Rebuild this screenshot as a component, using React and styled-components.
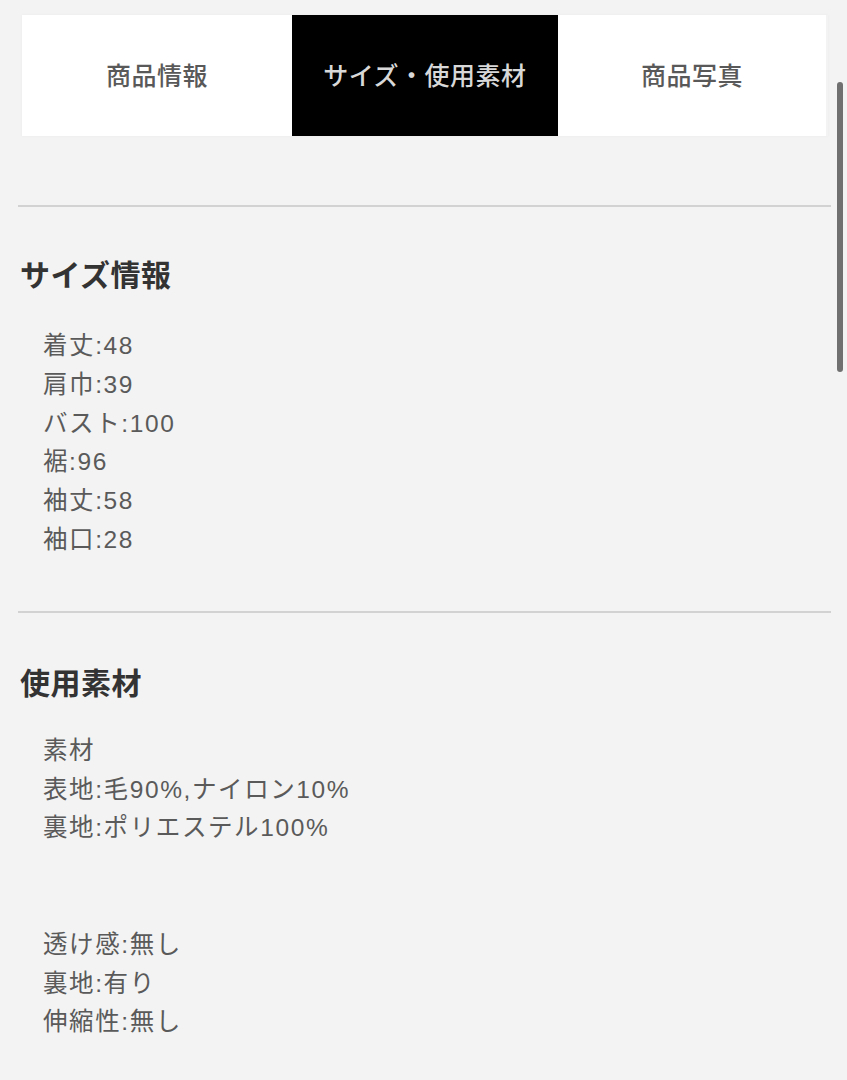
import React from 'react';
import styled, { createGlobalStyle } from 'styled-components';

const GlobalStyle = createGlobalStyle`
  html, body {
    margin: 0;
    padding: 0;
    background: #f3f3f3;
  }
  body {
    font-family: 'Liberation Sans', 'Noto Sans CJK JP', sans-serif;
  }
`;

const Page = styled.div`
  position: relative;
  width: 847px;
  height: 1080px;
  box-sizing: border-box;
  padding: 15px 16px 0 18px;
  overflow: hidden;
  background: #f3f3f3;
`;

const Tabs = styled.div`
  display: grid;
  grid-template-columns: 270px 266px 268px;
  height: 121px;
  margin: 0 3px 0 4px;
  box-shadow: 0 0 3px rgba(0, 0, 0, 0.04);
`;

const Tab = styled.div`
  display: flex;
  align-items: center;
  justify-content: center;
  background: ${(props) => (props.active ? '#000' : '#fff')};
  color: ${(props) => (props.active ? '#d8d8d8' : '#595959')};
  font-size: 25px;
  font-weight: 500;
  padding-bottom: 4px;
  letter-spacing: 0.5px;
`;

const Divider = styled.hr`
  margin: ${(props) => props.top} 0 0 0;
  border: 0;
  height: 2px;
  background: #d2d2d2;
`;

const Heading = styled.h2`
  margin: ${(props) => props.top} 0 0 2px;
  font-size: 30px;
  line-height: 40px;
  font-weight: 700;
  color: #333;
  letter-spacing: 0.5px;
`;

const List = styled.ul`
  list-style: none;
  margin: ${(props) => props.top} 0 0 0;
  padding: 0 0 0 25px;
`;

const Item = styled.li`
  height: 38.8px;
  line-height: 38.8px;
  font-size: 24.5px;
  color: #5a5a5a;
  letter-spacing: 1.6px;
`;

const Scrollbar = styled.div`
  position: absolute;
  top: 82px;
  left: 837px;
  width: 6px;
  height: 290px;
  border-radius: 3px;
  background: #707070;
`;

const tabs = ['商品情報', 'サイズ・使用素材', '商品写真'];

const sizes = ['着丈:48', '肩巾:39', 'バスト:100', '裾:96', '袖丈:58', '袖口:28'];

const materials = [
  '素材',
  '表地:毛90%,ナイロン10%',
  '裏地:ポリエステル100%',
  '',
  '',
  '透け感:無し',
  '裏地:有り',
  '伸縮性:無し',
];

function App() {
  return (
    <Page>
      <GlobalStyle />
      <Tabs>
        {tabs.map((t, i) => (
          <Tab key={t} active={i === 1}>
            {t}
          </Tab>
        ))}
      </Tabs>

      <Divider top={'69px'} />
      <Heading top={'49px'}>サイズ情報</Heading>
      <List top={'31px'}>
        {sizes.map((s) => (
          <Item key={s}>{s}</Item>
        ))}
      </List>

      <Divider top={'51px'} />
      <Heading top={'51px'}>使用素材</Heading>
      <List top={'28px'}>
        {materials.map((m, i) => (
          <Item key={i}>{m}</Item>
        ))}
      </List>

      <Scrollbar />
    </Page>
  );
}

export default App;
